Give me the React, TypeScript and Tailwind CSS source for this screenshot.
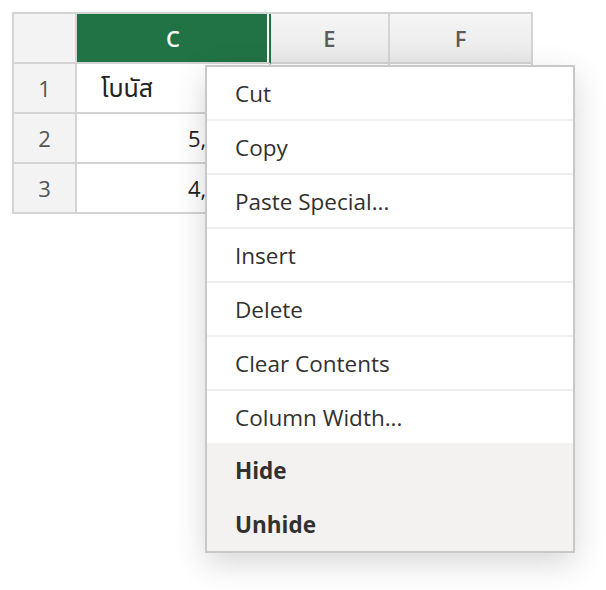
const font = { fontFamily: '"Open Sans", "Noto Sans", "Noto Sans Thai", "Tahoma", sans-serif' }

const menuItems = ['Cut', 'Copy', 'Paste Special...', 'Insert', 'Delete', 'Clear Contents', 'Column Width...']

export default function App() {
    return (
        <div className="relative w-[606px] h-[590px] bg-white" style={font}>
            {/* sheet grid */}
            <div className="absolute left-[12px] top-[12px] grid grid-cols-[63px_194px_119px_143px] border-l-2 border-t-2 border-[#d4d4d4] text-[22px]">
                {/* header row */}
                <div className="h-[50px] bg-[#f3f3f3] border-r-2 border-b-2 border-[#d4d4d4]" />
                <div className="h-[50px] bg-[#217346] border-r-2 border-b-2 border-r-[#217346] border-b-[#d4d4d4] shadow-[inset_-2px_0_0_#ffffff] flex items-center justify-center font-semibold text-white">
                    C
                </div>
                <div className="h-[50px] bg-gradient-to-b from-[#f5f5f5] to-[#e9e9e9] border-r-2 border-b-2 border-[#d4d4d4] flex items-center justify-center font-semibold text-[#5c5c5c]">
                    E
                </div>
                <div className="h-[50px] bg-gradient-to-b from-[#f5f5f5] to-[#e9e9e9] border-r-2 border-b-2 border-[#d4d4d4] flex items-center justify-center font-semibold text-[#5c5c5c]">
                    F
                </div>

                {/* row 1 */}
                <div className="h-[50px] bg-[#f3f3f3] border-r-2 border-b-2 border-[#d4d4d4] flex items-center justify-center text-[#555]">
                    1
                </div>
                <div className="h-[50px] border-r-2 border-b-2 border-[#d4d4d4] flex items-center pl-[24px] text-[25px] text-[#222]">
                    โบนัส
                </div>
                <div className="h-[50px] border-r-2 border-b-2 border-[#d4d4d4]" />
                <div className="h-[50px] border-r-2 border-b-2 border-[#d4d4d4]" />

                {/* row 2 */}
                <div className="h-[50px] bg-[#f3f3f3] border-r-2 border-b-2 border-[#d4d4d4] flex items-center justify-center text-[#555]">
                    2
                </div>
                <div className="h-[50px] border-r-2 border-b-2 border-[#d4d4d4] flex items-center pl-[111px] text-[#222]">
                    5,000
                </div>
                <div className="h-[50px] border-r-2 border-b-2 border-[#d4d4d4]" />
                <div className="h-[50px] border-r-2 border-b-2 border-[#d4d4d4]" />

                {/* row 3 */}
                <div className="h-[50px] bg-[#f3f3f3] border-r-2 border-b-2 border-[#d4d4d4] flex items-center justify-center text-[#555]">
                    3
                </div>
                <div className="h-[50px] border-r-2 border-b-2 border-[#d4d4d4] flex items-center pl-[111px] text-[#222]">
                    4,500
                </div>
                <div className="h-[50px] border-r-2 border-b-2 border-[#d4d4d4]" />
                <div className="h-[50px] border-r-2 border-b-2 border-[#d4d4d4]" />
            </div>

            {/* context menu */}
            <div className="absolute left-[205px] top-[65px] w-[370px] bg-white border-2 border-[#c8c8c8] shadow-[0_10px_30px_rgba(0,0,0,0.16)] text-[22.5px] text-[#323130]">
                {menuItems.map((label, i) => (
                    <div
                        key={label}
                        className={
                            i < menuItems.length - 1
                                ? 'h-[54px] border-b-2 border-[#efefef] flex items-center pl-[28px] pt-[2px]'
                                : 'h-[52px] flex items-center pl-[28px] pt-[2px]'
                        }
                    >
                        {label}
                    </div>
                ))}
                <div className="h-[54px] bg-[#f3f2f1] flex items-center pl-[28px] pt-[2px] font-bold">Hide</div>
                <div className="h-[54px] bg-[#f3f2f1] flex items-center pl-[28px] pt-[2px] font-bold">Unhide</div>
            </div>
        </div>
    )
}
